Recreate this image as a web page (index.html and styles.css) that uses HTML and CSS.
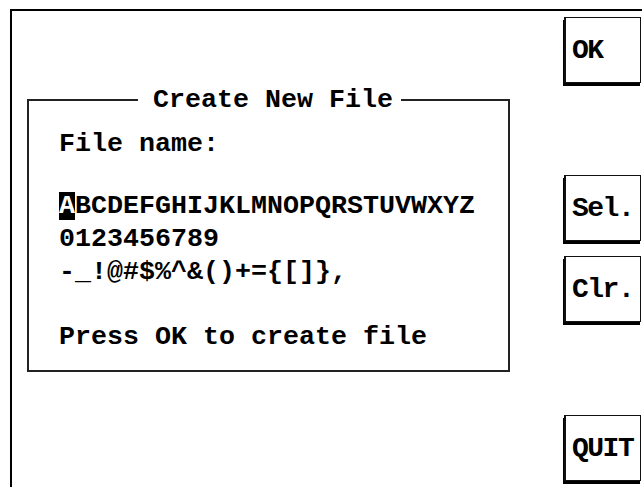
FILE: index.html
```html
<!DOCTYPE html>
<html>
<head>
<meta charset="utf-8">
<title>Create New File</title>
<link rel="stylesheet" href="styles.css">
</head>
<body>
<div class="screen">
  <fieldset class="dialog">
    <legend class="dialog-title">Create New File</legend>
    <div class="row label">File name:</div>
    <div class="charset">
      <div class="row"><span class="cursor">A</span>BCDEFGHIJKLMNOPQRSTUVWXYZ</div>
      <div class="row">0123456789</div>
      <div class="row">-_!@#$%^&amp;()+={[]},</div>
    </div>
    <div class="row hint">Press OK to create file</div>
  </fieldset>
  <div class="buttons">
    <button class="btn btn-ok">OK</button>
    <button class="btn btn-sel">Sel.</button>
    <button class="btn btn-clr">Clr.</button>
    <button class="btn btn-quit">QUIT</button>
  </div>
</div>
</body>
</html>
```
FILE: styles.css
```css
html, body {
  margin: 0;
  padding: 0;
  background: #fff;
  height: 100%;
  overflow: hidden;
}

body {
  font-family: "Liberation Mono", "DejaVu Sans Mono", monospace;
  color: #000;
}

.screen {
  margin: 9px 0 0 10px;
  border-top: 2px solid #000;
  border-left: 2px solid #000;
  height: 476px;
  display: flex;
  align-items: flex-start;
}

.dialog {
  margin: 74px 0 0 15px;
  padding: 13px 0 16px 30px;
  width: 449px;
  border: 2px solid #222;
  font-size: 26.667px;
  font-weight: bold;
  min-inline-size: 0;
}

.dialog-title {
  margin-left: 79px;
  padding: 0 8px 0 15px;
  line-height: 30px;
}

.row {
  line-height: 33px;
  white-space: pre;
}

.charset {
  margin-top: 29px;
}

.hint {
  margin-top: 32px;
}

.cursor {
  background: #000;
  color: #fff;
  display: inline-block;
  line-height: 28px;
}

.buttons {
  margin-left: auto;
  margin-right: 1px;
  padding-top: 6px;
  display: flex;
  flex-direction: column;
  width: 77px;
}

.btn {
  box-sizing: border-box;
  width: 77px;
  height: 66px;
  margin: 0;
  padding: 0 0 0 6px;
  background: #fff;
  color: #000;
  border: 1px solid #111;
  border-left-width: 2px;
  border-radius: 0;
  box-shadow: -1px 3px 0 #000;
  font-family: "Liberation Mono", "DejaVu Sans Mono", monospace;
  font-weight: bold;
  font-size: 28px;
  letter-spacing: -1.5px;
  text-align: left;
}

.btn-sel {
  margin-top: 92px;
}

.btn-clr {
  margin-top: 15px;
}

.btn-quit {
  margin-top: 93px;
}
```
